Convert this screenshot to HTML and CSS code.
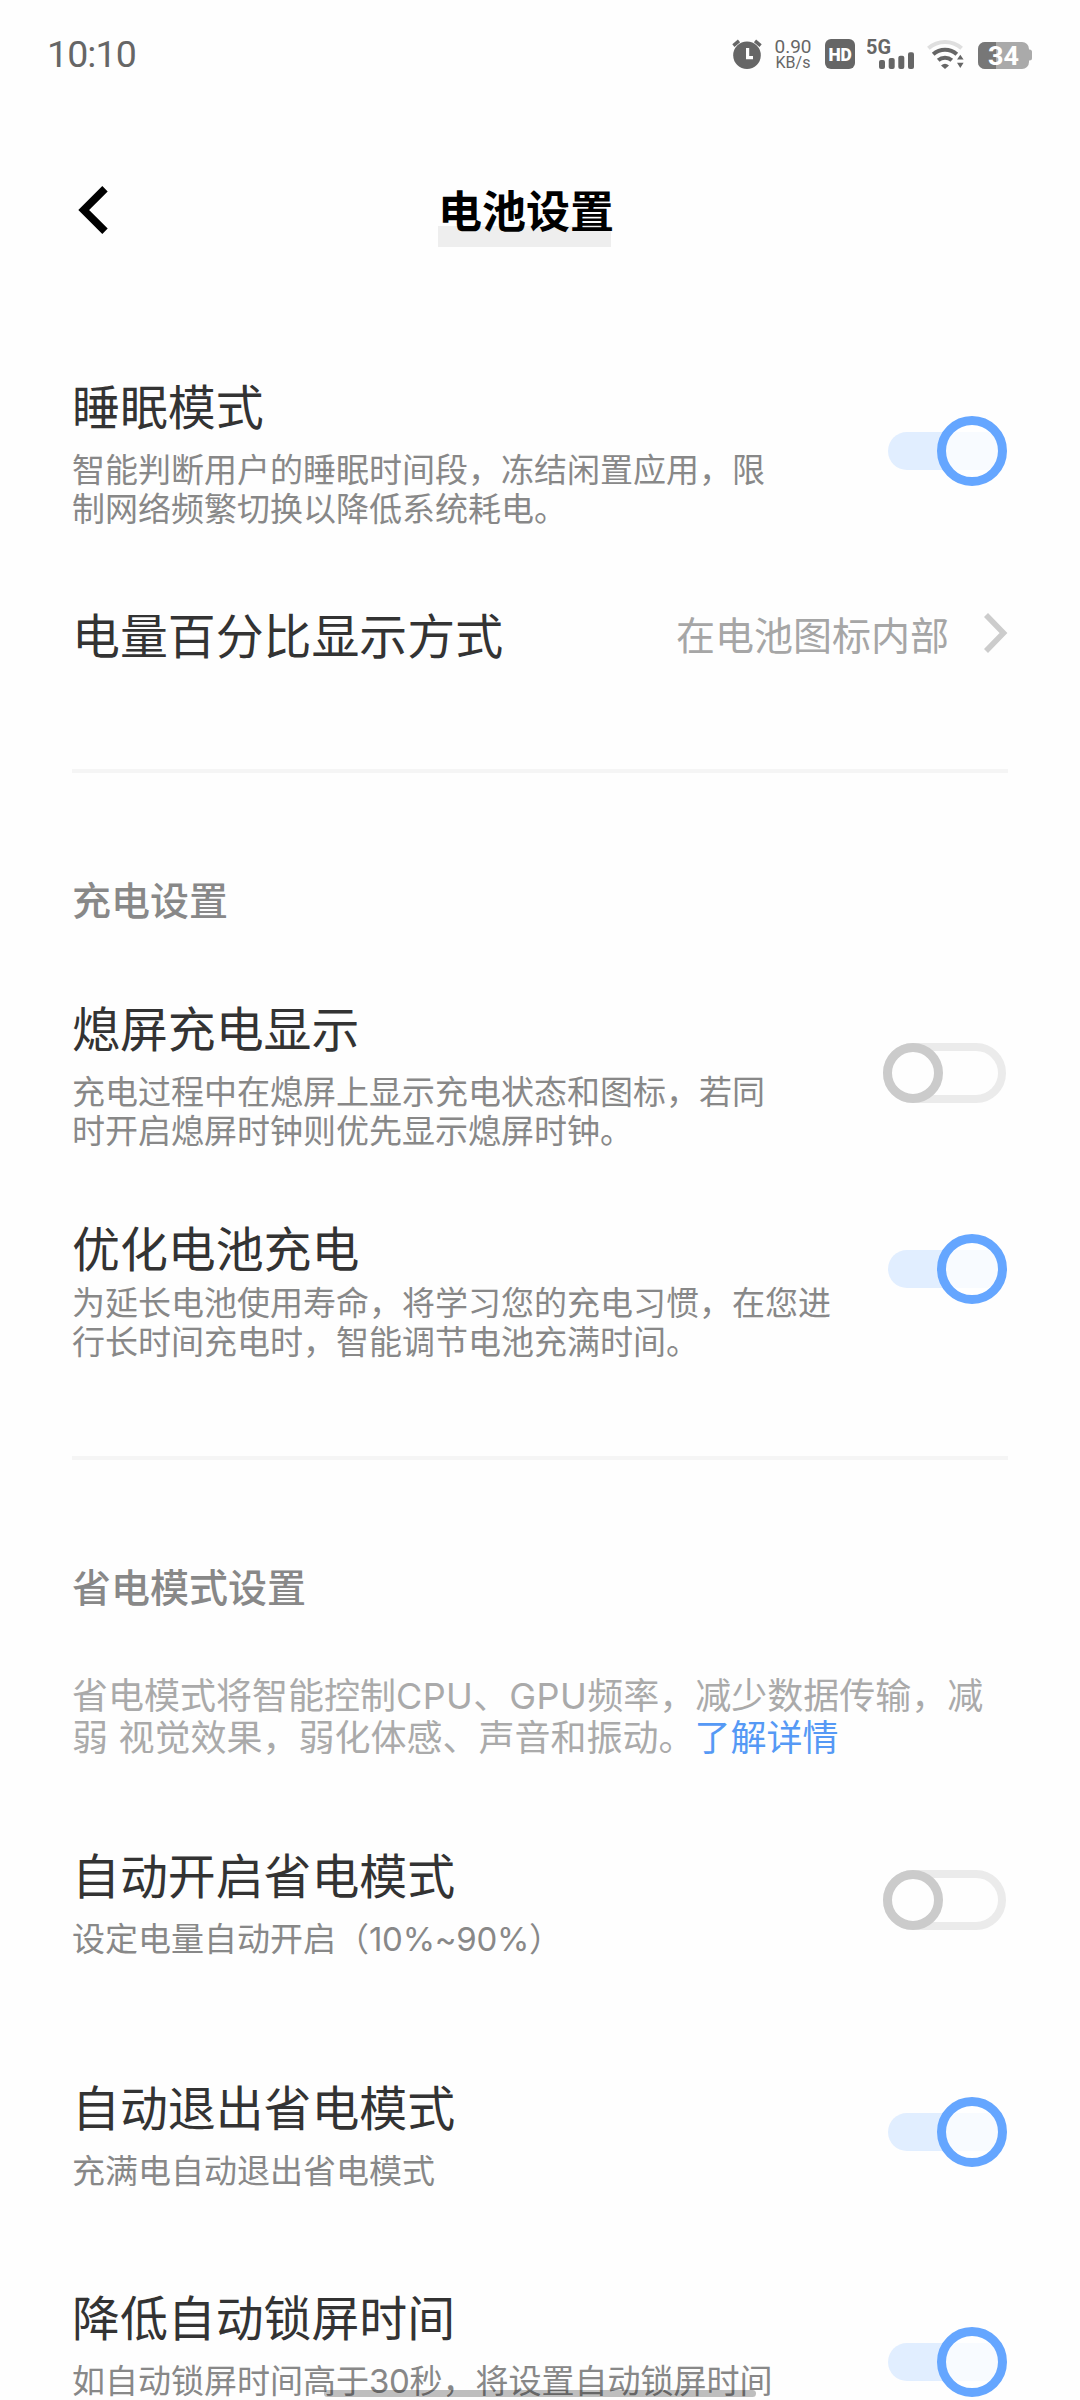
FILE: index.html
```html
<!DOCTYPE html>
<html lang="zh-CN">
<head>
<meta charset="utf-8">
<title>电池设置</title>
<link rel="stylesheet" href="styles.css">
</head>
<body>
<div class="status-bar">
  <span class="clock">10:10</span>
  <div class="status-icons">
    <svg class="icon" width="32" height="36" viewBox="0 0 32 36">
      <circle cx="16" cy="19.3" r="13.8" fill="#666"/>
      <path d="M2.4 9.6 8 4.9M29.6 9.6 24 4.9" stroke="#666" stroke-width="3.4" fill="none"/>
      <path d="M16.6 12v9.6H22" stroke="#fff" stroke-width="3.2" fill="none"/>
    </svg>
    <div class="speed"><span class="speed-value">0.90</span><span class="speed-unit">KB/s</span></div>
    <svg class="icon" width="32" height="36" viewBox="0 0 32 36">
      <rect x="2" y="3" width="30" height="30" rx="6" fill="#666"/>
      <text class="hd" x="5.4" y="25" textLength="23.500" lengthAdjust="spacingAndGlyphs">HD</text>
    </svg>
    <svg class="icon" width="47" height="36" viewBox="0 0 47 36">
      <text class="net" x="-1" y="17.8" textLength="25" lengthAdjust="spacingAndGlyphs">5G</text>
      <g fill="#666">
        <rect x="12" y="24" width="6" height="9" rx="2"/>
        <rect x="21.7" y="22" width="6" height="11" rx="2"/>
        <rect x="31.3" y="19.7" width="6" height="13.3" rx="2"/>
        <rect x="41" y="16.3" width="6" height="16.7" rx="2"/>
      </g>
    </svg>
    <svg class="icon" width="40" height="36" viewBox="0 0 40 36">
      <g fill="none" stroke-width="4">
        <path d="M2.4 12.3a25 25 0 0 1 33.2 0" stroke="#dfdfdf"/>
        <path d="M7.2 18.2a17.6 17.6 0 0 1 23.6 0" stroke="#666"/>
        <path d="M12.2 24.3a10.4 10.4 0 0 1 13.6 0" stroke="#666"/>
      </g>
      <path d="M15 29.4a6.200 6.200 0 0 1 8 0L19 33z" fill="#666"/>
      <path d="M31 23.600 34.300 18.800 37.600 23.600zM31 26.800h6.600L34.300 32z" fill="#666"/>
    </svg>
    <svg class="icon" width="54" height="36" viewBox="0 0 54 36">
      <path d="M50 13.500h1.500a2.500 2.500 0 0 1 2.500 2.500v6a2.500 2.500 0 0 1-2.500 2.500H50z" fill="#aaa"/>
      <rect x="0" y="6" width="51" height="27" rx="7" fill="#aaa"/>
      <path d="M7 6h11v27H7a7 7 0 0 1-7-7V13a7 7 0 0 1 7-7z" fill="#777"/>
      <text class="charge" x="10" y="29" textLength="31" lengthAdjust="spacingAndGlyphs">34</text>
    </svg>
  </div>
</div>

<header class="header">
  <div class="back">
    <svg class="icon" width="36" height="48" viewBox="0 0 36 48"><path d="M33 2.700 11.700 24 33 45.300" fill="none" stroke="#000" stroke-width="7.600"/></svg>
  </div>
  <h1 class="page-title">电池设置</h1>
</header>

<main class="list">
  <div class="row row-sleep">
    <div class="text">
      <div class="title">睡眠模式</div>
      <div class="desc">智能判断用户的睡眠时间段，冻结闲置应用，限<br>制网络频繁切换以降低系统耗电。</div>
    </div>
    <span class="toggle on"><span class="knob"></span></span>
  </div>
  <div class="row row-percent">
    <div class="title">电量百分比显示方式</div>
    <div class="value">在电池图标内部
      <svg class="icon" width="24" height="40" viewBox="0 0 24 40"><path d="M2 2 19.500 20 2 38" fill="none" stroke="#ccc" stroke-width="5.600"/></svg>
    </div>
  </div>

  <div class="divider divider-first"></div>
  <h2 class="section">充电设置</h2>
  <div class="row row-display">
    <div class="text">
      <div class="title">熄屏充电显示</div>
      <div class="desc">充电过程中在熄屏上显示充电状态和图标，若同<br>时开启熄屏时钟则优先显示熄屏时钟。</div>
    </div>
    <span class="toggle off"><span class="knob"></span></span>
  </div>
  <div class="row row-optimize">
    <div class="text">
      <div class="title">优化电池充电</div>
      <div class="desc">为延长电池使用寿命，将学习您的充电习惯，在您进<br>行长时间充电时，智能调节电池充满时间。</div>
    </div>
    <span class="toggle on"><span class="knob"></span></span>
  </div>

  <div class="divider divider-second"></div>
  <h2 class="section">省电模式设置</h2>
  <p class="note">省电模式将智能控制<span class="latin">CPU</span>、<span class="latin">GPU</span>频率，减少数据传输，减<br>弱<span class="latin"> </span>视觉效果，弱化体感、声音和振动。<a class="link">了解详情</a></p>
  <div class="row row-auto-on">
    <div class="text">
      <div class="title">自动开启省电模式</div>
      <div class="desc">设定电量自动开启（<span class="latin">10%~90%</span>）</div>
    </div>
    <span class="toggle off"><span class="knob"></span></span>
  </div>
  <div class="row row-auto-off">
    <div class="text">
      <div class="title">自动退出省电模式</div>
      <div class="desc">充满电自动退出省电模式</div>
    </div>
    <span class="toggle on"><span class="knob"></span></span>
  </div>
  <div class="row row-lock">
    <div class="text">
      <div class="title">降低自动锁屏时间</div>
      <div class="desc">如自动锁屏时间高于<span class="latin">30</span>秒，将设置自动锁屏时间</div>
    </div>
    <span class="toggle on"><span class="knob"></span></span>
  </div>
</main>
<div class="home-indicator"></div>
</body>
</html>
```
FILE: styles.css
```css
* { box-sizing: border-box; }
html { background: #fefefe; }
body {
  position: relative;
  width: 1080px;
  height: 2400px;
  margin: 0;
  overflow: hidden;
  background: #fefefe;
  color: #333;
  font-family: "Noto Sans CJK SC", sans-serif;
  white-space: nowrap;
}
.icon { display: block; flex: none; }
.latin { font-family: Inter, sans-serif; line-height: 1; }

/* Status bar */
.status-bar {
  display: flex;
  justify-content: space-between;
  align-items: center;
  height: 108px;
  padding: 0 48px 0 47px;
  color: #666;
  font-family: Roboto, sans-serif;
}
.clock { font-size: 37.5px; line-height: 44px; letter-spacing: -0.9px; }
.status-icons { display: flex; align-items: center; gap: 12px; }
.speed { display: flex; flex-direction: column; width: 36px; align-items: center; }
.speed-value { font-size: 19px; line-height: 17px; }
.speed-unit { font-size: 16px; line-height: 16px; }
.hd { font: 900 19px Roboto, sans-serif; fill: #fff; }
.net { font: 700 20.5px Roboto, sans-serif; fill: #666; }
.charge { font: 700 25px Roboto, sans-serif; fill: #fff; }

/* Header */
.header { display: flex; align-items: center; height: 202px; padding-left: 72px; }
.back { width: 366px; padding-top: 2px; }
.page-title {
  margin: 0;
  color: #000;
  font-size: 44px;
  font-weight: 700;
  line-height: 76px;
  background: linear-gradient(#eee, #eee) 0 55px / 173px 21px no-repeat;
}

/* Settings list */
.list { padding: 0 72px; }
.row { display: flex; justify-content: space-between; align-items: center; }
.title { font-size: 47.9px; line-height: 60px; }
.desc { margin-top: 15px; color: #888; font-size: 33px; line-height: 39px; }
.desc .latin { letter-spacing: -0.3px; }
.value {
  display: flex;
  align-items: center;
  gap: 35px;
  color: #a6a6a6;
  font-size: 39px;
  line-height: 60px;
}
.section { margin: 100px 0 0; color: #888; font-size: 39px; font-weight: 500; line-height: 50px; }
.divider { height: 4px; background: #f5f5f5; }
.divider-first { margin-top: 106px; }
.divider-second { margin-top: 96px; }
.note { margin: 62px 0 0; color: #aaa; font-size: 36px; line-height: 42px; }
.note .latin { letter-spacing: 0.4px; }
.link { color: #5599f5; }

.row-sleep { margin-top: 64px; height: 153px; }
.row-percent { margin-top: 76px; height: 60px; }
.row-display { margin-top: 73px; height: 153px; }
.row-optimize { margin-top: 67px; height: 144px; }
.row-optimize .desc { margin-top: 6px; }
.row-optimize .toggle { margin-bottom: 38px; }
.row-auto-on { margin-top: 87px; height: 114px; }
.row-auto-off { margin-top: 118px; height: 114px; }
.row-lock { margin-top: 96px; height: 153px; }
.row-lock .text { align-self: flex-start; }

/* Switches */
.toggle { display: flex; align-items: center; flex: none; }
.toggle.on {
  justify-content: flex-end;
  width: 118px;
  height: 38px;
  margin-right: 2px;
  border-radius: 19px;
  background: #e1eeff;
}
.toggle.on .knob {
  flex: none;
  width: 70px;
  height: 70px;
  margin-right: -1px;
  border: 9px solid #65a6ff;
  border-radius: 50%;
  background: rgba(255, 255, 255, 0.75);
  background-clip: padding-box;
}
.toggle.off {
  width: 123px;
  height: 60px;
  margin-right: 2px;
  border: 8px solid #ebebeb;
  border-radius: 30px;
}
.toggle.off .knob {
  flex: none;
  width: 60px;
  height: 60px;
  margin-left: -8px;
  border: 9px solid #cbcbcb;
  border-radius: 50%;
  background: #fefefe;
}

.home-indicator {
  position: absolute;
  left: 324px;
  top: 2390px;
  width: 432px;
  height: 7px;
  border-radius: 4px;
  background: rgba(0, 0, 0, 0.25);
}
```
